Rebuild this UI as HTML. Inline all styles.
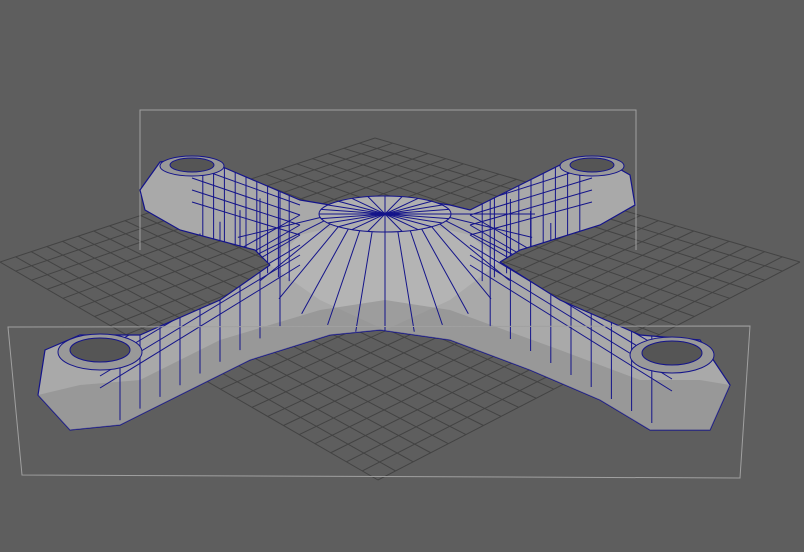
<!DOCTYPE html>
<html><head><meta charset="utf-8"><style>
html,body{margin:0;padding:0;background:#5e5e5e;width:804px;height:552px;overflow:hidden}
svg{display:block}
</style></head><body>
<svg width="804" height="552" viewBox="0 0 804 552" xmlns="http://www.w3.org/2000/svg">
<defs>
<clipPath id="cp"><path d="M140,190 L160,162 L200,157 L225,168 L300,200 L330,205 L385,196 L450,205 L470,210 L560,165 L600,158 L630,175 L635,205 L600,225 L520,250 L500,262 L560,300 L640,335 L700,340 L730,385 L710,430 L650,430 L600,400 L530,370 L450,340 L380,330 L330,335 L250,360 L170,400 L120,425 L70,430 L38,395 L45,350 L80,335 L140,335 L220,300 L270,265 L255,250 L180,230 L145,210 Z"/></clipPath>
</defs>
<rect width="804" height="552" fill="#5e5e5e"/>
<g id="grid" stroke="#434343" stroke-width="1" fill="none"></g>
<g stroke="#a0a0a0" stroke-width="1" fill="none">
<polyline points="140,250 140,110 636,110 636,250"/>
</g>
<path d="M140,190 L160,162 L200,157 L225,168 L300,200 L330,205 L385,196 L450,205 L470,210 L560,165 L600,158 L630,175 L635,205 L600,225 L520,250 L500,262 L560,300 L640,335 L700,340 L730,385 L710,430 L650,430 L600,400 L530,370 L450,340 L380,330 L330,335 L250,360 L170,400 L120,425 L70,430 L38,395 L45,350 L80,335 L140,335 L220,300 L270,265 L255,250 L180,230 L145,210 Z" fill="#a9a9a9" stroke="#14148a" stroke-width="1.2"/>
<g clip-path="url(#cp)">
<path d="M300,235 L385,215 L470,235 L500,262 L450,300 L385,330 L320,300 L270,265 Z" fill="#b4b4b4"/>
<path d="M38,395 L70,430 L120,425 L170,400 L250,360 L330,335 L380,330 L450,340 L530,370 L600,400 L650,430 L710,430 L730,385 L700,380 L640,380 L560,350 L450,310 L385,300 L320,310 L220,340 L140,380 L80,385 Z" fill="#8e8e8e" opacity="0.6"/>
<g stroke="#14148a" stroke-width="1" fill="none" id="wire"></g>
</g>
<ellipse cx="385" cy="214" rx="66" ry="18" fill="#b0b0b0" stroke="#14148a"/>
<g stroke="#14148a" stroke-width="1" fill="none" id="wire2"></g>
<ellipse cx="100" cy="352" rx="42" ry="18" fill="#999" stroke="#14148a"/>
<ellipse cx="100" cy="350" rx="30" ry="12" fill="#555" stroke="#14148a"/>
<ellipse cx="672" cy="355" rx="42" ry="18" fill="#999" stroke="#14148a"/>
<ellipse cx="672" cy="353" rx="30" ry="12" fill="#555" stroke="#14148a"/>
<ellipse cx="192" cy="166" rx="32" ry="10" fill="#999" stroke="#14148a"/>
<ellipse cx="192" cy="165" rx="22" ry="7" fill="#555" stroke="#14148a"/>
<ellipse cx="592" cy="166" rx="32" ry="10" fill="#999" stroke="#14148a"/>
<ellipse cx="592" cy="165" rx="22" ry="7" fill="#555" stroke="#14148a"/>
<g stroke="#a0a0a0" stroke-width="1" fill="none">
<polygon points="8,327 750,326 740,478 22,475"/>
</g>
<script>
var ns="http://www.w3.org/2000/svg";
var g=document.getElementById("grid");
var L=[0,262],T=[375,138],R=[800,262],B=[378,480];
function lerp(a,b,t){return [a[0]+(b[0]-a[0])*t,a[1]+(b[1]-a[1])*t];}
function ln(p,q,par){var l=document.createElementNS(ns,"line");l.setAttribute("x1",p[0]);l.setAttribute("y1",p[1]);l.setAttribute("x2",q[0]);l.setAttribute("y2",q[1]);par.appendChild(l);}
var N=24;
for(var i=0;i<=N;i++){var t=i/N;ln(lerp(L,T,t),lerp(B,R,t),g);ln(lerp(L,B,t),lerp(T,R,t),g);}
var w=document.getElementById("wire");var w2=document.getElementById("wire2");var C=[385,214];
for(var i=0;i<24;i++){var a=i/24*Math.PI*2;ln(C,[C[0]+66*Math.cos(a),C[1]+18*Math.sin(a)],w2);}
for(var i=0;i<16;i++){var a=(i/16)*Math.PI;ln([C[0]+66*Math.cos(a),C[1]+18*Math.sin(a)],[C[0]+150*Math.cos(a),C[1]+120*Math.sin(a)],w);}
ln([385,232],[385,330],w);
var arms=[[[300,235],[100,352]],[[470,235],[672,355]],[[300,205],[192,166]],[[470,205],[592,166]]];
arms.forEach(function(a){for(var k=1;k<10;k++){var p=lerp(a[0],a[1],k/10);ln([p[0],p[1]-60],[p[0],p[1]+80],w);}
for(var j=-2;j<=3;j++){ln([a[0][0],a[0][1]+j*10],[a[1][0],a[1][1]+j*12],w);}});
</script>
</svg>
</body></html>
